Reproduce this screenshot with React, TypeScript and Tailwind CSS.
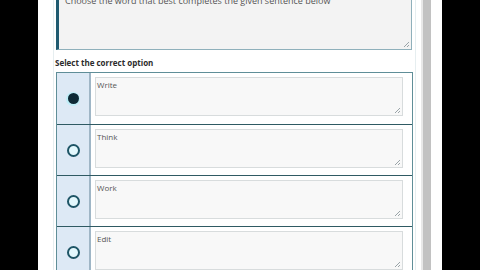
import React from 'react';

const options = ['Write', 'Think', 'Work', 'Edit'];

function Radio({ checked }: { checked: boolean }) {
  if (checked) {
    return (
      <span className="block w-[14px] h-[14px] rounded-full bg-[#bfeef8] p-[1.5px]">
        <span className="block w-full h-full rounded-full bg-[#0e2a36]" />
      </span>
    );
  }
  return <span className="block w-[13px] h-[13px] rounded-full border-2 border-[#1e5566] bg-[#e3f8fd]" />;
}

function Grip() {
  return (
    <svg className="absolute right-[1px] bottom-[1px]" width="8" height="8" viewBox="0 0 8 8">
      <path d="M7 2 L2 7 M7 5 L5 7" stroke="#9aa4a8" strokeWidth="1" />
    </svg>
  );
}

export default function App() {
  return (
    <div className="w-[480px] h-[270px] overflow-hidden bg-black flex font-['Open_Sans','Noto_Sans',sans-serif]">
      <div className="w-[38px] shrink-0" />
      <div className="w-[404px] shrink-0 bg-white flex">
        <div className="ml-[15px] w-[363px] border-l border-r border-[#e6eef0] flex flex-col">
          <div className="relative ml-[2px] w-[356px] h-[64px] mt-[-14px] shrink-0 bg-[#f3f3f3] border border-[#8fb0bb] border-l-[3px] border-l-[#1f5a70] px-[6px] pt-[8px]">
            <p className="text-[9px] leading-[11px] text-[#555] whitespace-nowrap">
              Choose the word that best completes the given sentence below
            </p>
            <Grip />
          </div>
          <p className="mt-[8px] ml-[1px] text-[8px] leading-[10px] font-bold text-[#2b2b2b]">Select the correct option</p>
          <div className="mt-[4px] ml-[2px] w-[357px] border border-[#5f8e98]">
            {options.map((o, i) => (
              <div key={o} className={`flex h-[51px] ${i > 0 ? 'border-t border-[#2f5a63]' : ''}`}>
                <div className="w-[34px] shrink-0 bg-[#dde9f5] border-r-2 border-[#9fb6c6] flex items-center justify-center">
                  <Radio checked={i === 0} />
                </div>
                <div className="flex-1 pl-[4px] pr-[9px] pt-[4px]">
                  <div className="relative h-[39px] bg-[#f8f8f8] border border-[#d8dcdd] px-[1px] pt-[2px]">
                    <p className="text-[8px] leading-[10px] text-[#555]">{o}</p>
                    <Grip />
                  </div>
                </div>
              </div>
            ))}
          </div>
        </div>
        <div className="ml-[5px] w-[10px] flex shrink-0">
          <div className="w-[2px] bg-[#e8e8e8]" />
          <div className="w-[8px] bg-[#c2c2c2]" />
        </div>
      </div>
      <div className="flex-1" />
    </div>
  );
}
